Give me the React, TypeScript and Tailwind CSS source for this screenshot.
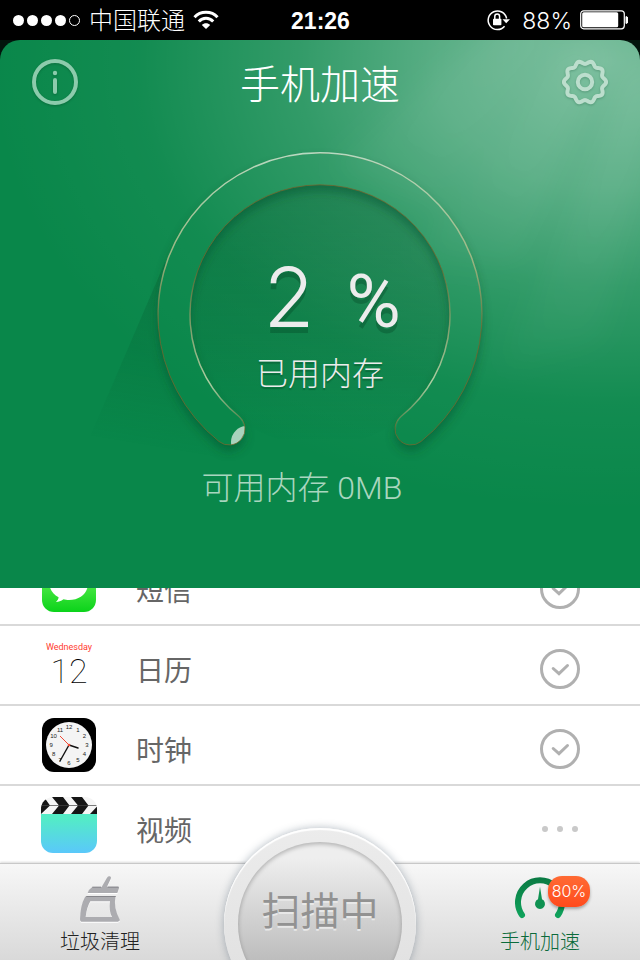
import type { ReactNode } from "react";

type AppRow = {
  id: string;
  name: string;
  icon: ReactNode;
  scanned: boolean;
};

const RING =
  "M219 441.5 A162 162 0 1 1 421 441.5 A16 16 0 0 1 401 416.5 A130 130 0 1 0 239 416.5 A16 16 0 0 1 219 441.5 Z";

function gearPath(teeth: number, radius: number, depth: number) {
  const points: string[] = [];
  for (let i = 0; i < 240; i++) {
    const angle = (i / 240) * Math.PI * 2;
    const r = radius + depth * Math.cos(angle * teeth);
    points.push(`${(23 + r * Math.cos(angle)).toFixed(2)} ${(23 + r * Math.sin(angle)).toFixed(2)}`);
  }
  return `M${points.join("L")}Z`;
}

function StatusBar() {
  return (
    <div className="grid h-10 shrink-0 grid-cols-[1fr_auto_1fr] items-center bg-black pr-3 pl-[13px] text-2xl text-white">
      <div className="flex items-center">
        <div className="flex gap-[3px]">
          <span className="size-[11px] rounded-full bg-white" />
          <span className="size-[11px] rounded-full bg-white" />
          <span className="size-[11px] rounded-full bg-white" />
          <span className="size-[11px] rounded-full bg-white" />
          <span className="size-[11px] rounded-full border border-white" />
        </div>
        <span className="ml-[9px] pt-[2px] leading-8 font-light">中国联通</span>
        <svg className="ml-[7px] h-5 w-7" viewBox="0 0 28 20" fill="none" stroke="#fff" strokeWidth="3">
          <path d="M2.5 7.2 C8.5 0.6 19.5 0.6 25.5 7.2" />
          <path d="M6.8 11.5 C10.8 7.3 17.2 7.3 21.2 11.5" />
          <path d="M14 19 L9.8 14.9 C12.2 12.6 15.8 12.6 18.2 14.9 Z" fill="#fff" stroke="none" />
        </svg>
      </div>
      <span className="pt-[2px] text-[23px] leading-8 font-bold">21:26</span>
      <div className="flex items-center justify-end">
        <svg className="h-6 w-6" viewBox="0 0 24 24" fill="none" stroke="#fff">
          <path d="M18.6 18.2 A9.3 9.3 0 1 1 20.6 10.5" strokeWidth="1.5" />
          <path d="M16.5 11.2 H24 L20.2 15.2 Z" fill="#fff" stroke="none" />
          <rect x="7" y="10.8" width="8.4" height="6.4" rx="0.8" fill="#fff" stroke="none" />
          <path d="M8.8 11 V8.4 A2.4 2.4 0 0 1 13.6 8.4 V11" strokeWidth="1.5" />
        </svg>
        <span className="ml-3 pt-[2px] font-[Inter] text-[23px] leading-8 font-light">88%</span>
        <svg className="ml-2 h-5 w-12" viewBox="0 0 48 20">
          <rect x="0.7" y="0.8" width="43.6" height="18" rx="3" fill="none" stroke="#fff" strokeWidth="1.2" />
          <rect x="2.2" y="2.3" width="36" height="15" rx="1.5" fill="#fff" />
          <path d="M46 6.5 A3.6 3.6 0 0 1 46 13.5 Z" fill="#fff" stroke="#fff" />
        </svg>
      </div>
    </div>
  );
}

function LightBeams() {
  return (
    <svg
      className="pointer-events-none absolute inset-0 h-full w-full"
      viewBox="0 0 640 548"
      preserveAspectRatio="none"
      aria-hidden="true"
    >
      <defs>
        <linearGradient id="beam" x1="620" y1="0" x2="400" y2="420" gradientUnits="userSpaceOnUse">
          <stop offset="0" stopColor="#fff" stopOpacity="0.07" />
          <stop offset="1" stopColor="#fff" stopOpacity="0" />
        </linearGradient>
        <filter id="haze" x="-20%" y="-20%" width="140%" height="140%">
          <feGaussianBlur stdDeviation="14" />
        </filter>
      </defs>
      <g fill="url(#beam)" filter="url(#haze)">
        <path d="M500 -20 L560 -20 L440 170 L330 130 L260 190 Z" />
        <path d="M560 0 L610 0 L520 230 L410 220 Z" />
        <path d="M640 10 L660 60 L600 300 L500 330 Z" />
      </g>
    </svg>
  );
}

function Gauge() {
  return (
    <svg className="col-start-1 row-start-1 h-[330px] w-[520px]" viewBox="60 140 520 330" fill="none">
      <defs>
        <linearGradient id="disk" x1="0" y1="180" x2="0" y2="440" gradientUnits="userSpaceOnUse">
          <stop offset="0" stopColor="#0a5c33" stopOpacity="0.34" />
          <stop offset="0.6" stopColor="#0a5c33" stopOpacity="0.2" />
          <stop offset="1" stopColor="#0a5c33" stopOpacity="0" />
        </linearGradient>
        <linearGradient id="wedge" x1="200" y1="270" x2="170" y2="450" gradientUnits="userSpaceOnUse">
          <stop offset="0" stopColor="#06542d" stopOpacity="0.3" />
          <stop offset="1" stopColor="#06542d" stopOpacity="0" />
        </linearGradient>
        <linearGradient id="outerEdge" x1="0" y1="153" x2="0" y2="330" gradientUnits="userSpaceOnUse">
          <stop offset="0" stopColor="#b5dac2" />
          <stop offset="0.6" stopColor="#a9c793" stopOpacity="0.8" />
          <stop offset="1" stopColor="#a9c793" stopOpacity="0" />
        </linearGradient>
        <linearGradient id="innerEdge" x1="0" y1="270" x2="0" y2="430" gradientUnits="userSpaceOnUse">
          <stop offset="0" stopColor="#a9c793" stopOpacity="0" />
          <stop offset="0.7" stopColor="#a9d0a4" />
          <stop offset="1" stopColor="#a9d0a4" stopOpacity="0" />
        </linearGradient>
        <filter id="soft" x="-20%" y="-20%" width="140%" height="140%">
          <feGaussianBlur stdDeviation="5" />
        </filter>
        <mask id="outsideRing" maskUnits="userSpaceOnUse" x="60" y="140" width="520" height="330">
          <rect x="60" y="140" width="520" height="330" fill="#fff" />
          <path d={RING} fill="#000" />
        </mask>
        <clipPath id="insideRing">
          <path d={RING} />
        </clipPath>
      </defs>
      <g mask="url(#outsideRing)">
        <path d="M165 262 L76 470 H240 L175 315 Z" fill="url(#wedge)" />
        <circle cx="320" cy="315" r="131" fill="url(#disk)" />
        <path d={RING} transform="translate(0 6)" fill="#0b4a2a" fillOpacity="0.45" filter="url(#soft)" />
      </g>
      <circle cx="247" cy="442" r="16" fill="#a8d3bd" clipPath="url(#insideRing)" />
      <path d={RING} stroke="#78652c" strokeOpacity="0.75" />
      <path d="M219 441.5 A162 162 0 1 1 421 441.5" stroke="url(#outerEdge)" strokeWidth="1.5" />
      <path
        d="M244 430 A16 16 0 0 0 239 416.5 A130 130 0 1 1 401 416.5 A16 16 0 0 0 396 430"
        stroke="url(#innerEdge)"
        strokeWidth="1.5"
      />
    </svg>
  );
}

function Hero() {
  return (
    <div className="shrink-0 bg-[#02150c]">
      <section className="relative overflow-hidden rounded-t-[20px] bg-[#09874a] bg-[radial-gradient(620px_450px_at_95%_4%,rgba(255,255,255,0.45),rgba(255,255,255,0.32)_28%,rgba(255,255,255,0.17)_50%,rgba(255,255,255,0.04)_76%,transparent)] pb-[82px]">
        <LightBeams />
        <header className="relative flex h-[84px] items-center justify-between px-8">
          <button type="button" aria-label="关于" className="drop-shadow-[0_1px_1px_rgba(0,60,30,0.35)]">
            <svg className="size-[46px]" viewBox="0 0 46 46" fill="none" stroke="#8ccbac">
              <circle cx="23" cy="23" r="21" strokeWidth="4" />
              <circle cx="23" cy="14" r="2.2" fill="#8ccbac" stroke="none" />
              <path d="M23 21 V33" strokeWidth="4" strokeLinecap="round" />
            </svg>
          </button>
          <h1 className="pt-[6px] text-[40px] leading-[60px] font-light text-white">手机加速</h1>
          <button type="button" aria-label="设置" className="drop-shadow-[0_1px_1px_rgba(0,60,30,0.25)]">
            <svg className="size-[46px]" viewBox="0 0 46 46" fill="none" stroke="#bcdecd" strokeWidth="4">
              <path d={gearPath(10, 19.6, 1.5)} strokeLinejoin="round" />
              <circle cx="23" cy="23" r="7.2" />
            </svg>
          </button>
        </header>

        <div className="relative mt-4 grid justify-center">
          <Gauge />
          <div className="col-start-1 row-start-1 flex flex-col items-center pt-[113px] text-[#ececec]">
            <div className="flex items-baseline gap-8 pl-6 [text-shadow:0_6px_0_rgba(0,60,30,0.3)]">
              <span className="font-[Inter] text-[83px] leading-[88px] font-light">2</span>
              <span className="font-[Roboto] text-[74px] leading-[88px]">%</span>
            </div>
            <p className="mt-1 text-[32px] leading-[48px] font-light [text-shadow:0_2px_1px_rgba(0,60,30,0.35)]">
              已用内存
            </p>
          </div>
        </div>
        <p className="relative pr-9 text-center font-[Roboto,'Noto_Sans_CJK_SC',sans-serif] text-[32px] leading-9 font-light text-[#a9d6bf]">
          可用内存 0MB
        </p>
      </section>
    </div>
  );
}

function MessagesIcon() {
  return (
    <svg className="size-[54px]" viewBox="0 0 54 54">
      <defs>
        <linearGradient id="msg" x1="0" y1="0" x2="0" y2="1">
          <stop offset="0" stopColor="#86fb6d" />
          <stop offset="1" stopColor="#0bd31a" />
        </linearGradient>
      </defs>
      <rect width="54" height="54" rx="12" fill="url(#msg)" />
      <path
        d="M27 9 C38 9 46 16 46 25.5 C46 35 38 42 27 42 C25 42 23 41.7 21.5 41.3 C19 43 16.5 44 14 44 C15.5 42.5 16.5 41 16.6 39.3 C11 36.5 7.5 31.5 7.5 25.5 C7.5 16 16 9 27 9 Z"
        fill="#fff"
      />
    </svg>
  );
}

function CalendarIcon() {
  return (
    <div className="flex h-[54px] w-[54px] flex-col items-center pt-1">
      <span className="font-[Roboto] text-[9px] leading-[10px] text-[#ff3b30]">Wednesday</span>
      <span className="mt-[2px] font-[Roboto] text-[34px] leading-[34px] font-thin text-black">12</span>
    </div>
  );
}

function ClockIcon() {
  const hours = [1, 2, 3, 4, 5, 6, 7, 8, 9, 10, 11, 12];
  return (
    <svg className="size-[54px]" viewBox="0 0 54 54">
      <rect width="54" height="54" rx="12" fill="#000" />
      <circle cx="27" cy="27" r="23" fill="#f4f4f4" />
      {hours.map((hour) => {
        const angle = (hour * Math.PI) / 6;
        return (
          <text
            key={hour}
            x={27 + 17.8 * Math.sin(angle)}
            y={29 - 17.8 * Math.cos(angle)}
            fontSize="6"
            textAnchor="middle"
            fill="#222"
          >
            {hour}
          </text>
        );
      })}
      <path d="M27 27 L36 30 M27 27 L18 43" stroke="#111" strokeWidth="1.4" strokeLinecap="round" />
      <path d="M27 27 L18 18" stroke="#f04a35" />
      <circle cx="27" cy="27" r="1.3" fill="#f04a35" />
    </svg>
  );
}

function VideosIcon() {
  return (
    <svg className="size-14" viewBox="0 0 56 56">
      <defs>
        <linearGradient id="film" x1="0" y1="0" x2="0" y2="1">
          <stop offset="0.1" stopColor="#53ecc6" />
          <stop offset="1" stopColor="#5ac8fa" />
        </linearGradient>
        <clipPath id="filmShape">
          <rect width="56" height="56" rx="12" />
        </clipPath>
      </defs>
      <g clipPath="url(#filmShape)">
        <rect width="56" height="17" fill="#f5f5f5" />
        <g fill="#151515">
          <path d="M-8 0 H3 L9 8.5 L0 17 H-9 L-1 8.5 Z" />
          <path d="M11 0 H22 L28.5 8.5 L22 17 H11 L18 8.5 Z" />
          <path d="M30 0 H41 L47.5 8.5 L41 17 H30 L37 8.5 Z" />
          <path d="M56 9.5 V17 H49 Z" />
        </g>
        <path d="M0 8.5 H56" stroke="#444" strokeWidth="0.7" />
        <rect y="17" width="56" height="39" fill="url(#film)" />
      </g>
    </svg>
  );
}

const rows: AppRow[] = [
  { id: "messages", name: "短信", icon: <MessagesIcon />, scanned: true },
  { id: "calendar", name: "日历", icon: <CalendarIcon />, scanned: true },
  { id: "clock", name: "时钟", icon: <ClockIcon />, scanned: true },
  { id: "videos", name: "视频", icon: <VideosIcon />, scanned: false },
];

function RowCheck({ id }: { id: string }) {
  return (
    <span className="grid">
      <input
        id={id}
        type="checkbox"
        defaultChecked
        className="col-start-1 row-start-1 size-10 appearance-none rounded-full border-3 border-[#b0b0b0]"
      />
      <svg
        className="pointer-events-none col-start-1 row-start-1 size-10"
        viewBox="0 0 40 40"
        fill="none"
        stroke="#b0b0b0"
        strokeWidth="3"
        strokeLinecap="round"
      >
        <path d="M13.2 19.5 L19 24.7 L27.5 16.5" />
      </svg>
    </span>
  );
}

function AppList() {
  return (
    <main className="min-h-0 flex-1 overflow-hidden bg-white">
      {/* scrolled part way past the first row */}
      <ul className="-mt-[42px]">
        {rows.map((row) => (
          <li key={row.id} className="flex h-20 items-center border-b-2 border-[#d9d9d9] pt-2 pr-[60px] pl-[41px]">
            <span className="mb-2 flex w-14 justify-center">{row.icon}</span>
            <label htmlFor={row.id} className="ml-[39px] flex-1 pt-[6px] text-[28px] leading-10 text-[#666]">
              {row.name}
            </label>
            {row.scanned ? (
              <RowCheck id={row.id} />
            ) : (
              <output id={row.id} aria-label="扫描中" className="flex w-10 justify-center gap-[9px]">
                <span className="size-[6px] rounded-full bg-[#c9c9c9]" />
                <span className="size-[6px] rounded-full bg-[#c9c9c9]" />
                <span className="size-[6px] rounded-full bg-[#c9c9c9]" />
              </output>
            )}
          </li>
        ))}
      </ul>
    </main>
  );
}

function TabBar() {
  return (
    <nav className="relative flex h-[97px] shrink-0 justify-between border-t border-[#c8c8c8] bg-linear-to-b from-[#f7f7f7] to-[#d9d9d9] shadow-[0_-1px_2px_rgba(0,0,0,0.15)]">
      <button type="button" className="flex w-[200px] flex-col items-center pt-3">
        <svg className="h-12 w-10 drop-shadow-[0_1px_0_#fff]" viewBox="120 78 120 144" fill="#acacb0">
          <path d="M201 83 Q204 77 209 79 Q215 81 212 87 L201 110 H234 Q238 111 237 115 L232 129 H143 Q147 117 157 111 H185 Z" />
          <path
            fillRule="evenodd"
            d="M140 138 H227 Q219 172 240 211 L234 215 H124 Q120 215 120 208 Q121 166 134 143 Q136 139 140 138 Z M151 154 Q140 172 137 201 H216 Q206 184 210 154 Z"
          />
          <path d="M157 111.5 H183 M203 111.5 H236 M139 139.5 H227" stroke="#85858a" strokeWidth="3" />
        </svg>
        <span className="mt-1 text-xl leading-7 font-light text-[#222]">垃圾清理</span>
      </button>

      <button
        type="button"
        className="absolute -top-9 left-1/2 flex size-48 -translate-x-1/2 items-center justify-center rounded-full bg-linear-to-b from-[#ececec] to-[#dedede] shadow-[0_0_8px_rgba(60,80,100,0.4),inset_0_2px_1px_#fff]"
      >
        <span className="flex size-[164px] items-center justify-center rounded-full bg-linear-to-b from-[#eeeeee] from-10% to-[#a8a8a8] pb-6 text-[39px] text-[#929292] shadow-[inset_0_2px_4px_rgba(0,0,0,0.25)] [text-shadow:0_2px_0_#e8e8e8]">
          扫描中
        </span>
      </button>

      <button type="button" className="flex w-[200px] flex-col items-center pt-3">
        <span className="relative h-12 w-[50px]">
          <svg className="h-12 w-[50px]" viewBox="105 78 150 144" fill="none">
            <defs>
              <linearGradient id="dial" x1="0" y1="82" x2="0" y2="205" gradientUnits="userSpaceOnUse">
                <stop offset="0" stopColor="#0a7a43" />
                <stop offset="1" stopColor="#10a45d" />
              </linearGradient>
            </defs>
            <path
              d="M126 195 A66 66 0 1 1 234 195"
              stroke="url(#dial)"
              strokeWidth="18"
              strokeLinecap="round"
            />
            <path d="M180 110 L186 148 A15 15 0 1 1 174 148 Z" fill="#0f9252" />
          </svg>
          <span className="absolute top-0 left-[33px] h-[31px] w-[42px] rounded-[14px] bg-linear-to-b from-[#ff6a33] to-[#ff4a1c] text-center font-[Inter] text-base leading-[31px] font-light text-white shadow-[0_2px_3px_rgba(0,0,0,0.3)]">
            80%
          </span>
        </span>
        <span className="mt-1 text-xl leading-7 font-light text-[#0b6b3b]">手机加速</span>
      </button>
    </nav>
  );
}

export default function App() {
  return (
    <div className="flex h-screen flex-col overflow-hidden bg-white font-['Liberation_Sans','Noto_Sans_CJK_SC',sans-serif]">
      <StatusBar />
      <Hero />
      <AppList />
      <TabBar />
    </div>
  );
}
